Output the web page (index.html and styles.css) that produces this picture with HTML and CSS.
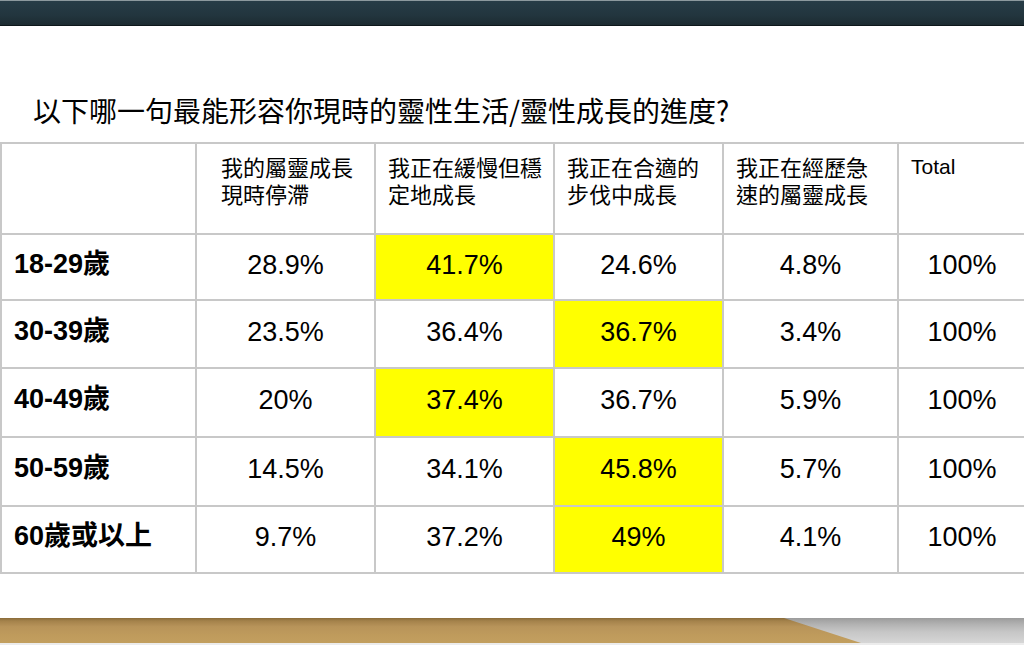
FILE: index.html
```html
<!DOCTYPE html>
<html lang="zh-Hant">
<head>
<meta charset="utf-8">
<title>靈性成長進度</title>
<link rel="stylesheet" href="styles.css">
</head>
<body>
<div class="slide">
  <div class="topbar"></div>
  <h1 class="title">以下哪一句最能形容你現時的靈性生活/靈性成長的進度?</h1>
  <table class="data">
    <colgroup>
      <col class="c0"><col class="c1"><col class="c2"><col class="c3"><col class="c4"><col class="c5">
    </colgroup>
    <thead>
      <tr class="head">
        <th></th>
        <th class="wide">我的屬靈成長<br>現時停滯</th>
        <th>我正在緩慢但穩<br>定地成長</th>
        <th>我正在合適的<br>步伐中成長</th>
        <th>我正在經歷急<br>速的屬靈成長</th>
        <th class="en">Total</th>
      </tr>
    </thead>
    <tbody>
      <tr class="r1"><th>18-29歲</th><td>28.9%</td><td class="hi">41.7%</td><td>24.6%</td><td>4.8%</td><td>100%</td></tr>
      <tr class="r2"><th>30-39歲</th><td>23.5%</td><td>36.4%</td><td class="hi">36.7%</td><td>3.4%</td><td>100%</td></tr>
      <tr class="r3"><th>40-49歲</th><td>20%</td><td class="hi">37.4%</td><td>36.7%</td><td>5.9%</td><td>100%</td></tr>
      <tr class="r4"><th>50-59歲</th><td>14.5%</td><td>34.1%</td><td class="hi">45.8%</td><td>5.7%</td><td>100%</td></tr>
      <tr class="r5"><th>60歲或以上</th><td>9.7%</td><td>37.2%</td><td class="hi">49%</td><td>4.1%</td><td>100%</td></tr>
    </tbody>
  </table>
  <div class="spacer"></div>
  <div class="footbar"></div>
  <div class="footedge"></div>
</div>
</body>
</html>
```

FILE: styles.css
```css
html, body {
  margin: 0;
  padding: 0;
  background: #ffffff;
  overflow: hidden;
}

.slide {
  width: 1024px;
  height: 645px;
  display: flex;
  flex-direction: column;
  overflow: hidden;
  font-family: "Liberation Sans", "Noto Sans CJK TC", sans-serif;
  color: #000;
}

.topbar {
  flex: 0 0 auto;
  height: 24px;
  border-top: 1px solid #8c999e;
  border-bottom: 1px solid #0d171b;
  background: linear-gradient(to bottom, #273c47 0%, #22353e 60%, #1c2b31 100%);
}

.title {
  margin: 64px 0 12px 33px;
  height: 40px;
  font-family: "Noto Sans CJK TC", sans-serif;
  font-weight: 400;
  font-size: 28px;
  line-height: 40px;
  white-space: nowrap;
}

.data {
  flex: 0 0 auto;
  border-collapse: collapse;
  table-layout: fixed;
  width: 1025px;
  margin-left: 0;
}

.c0 { width: 195px; }
.c1 { width: 179px; }
.c2 { width: 179px; }
.c3 { width: 169px; }
.c4 { width: 175px; }
.c5 { width: 128px; }

.data th,
.data td {
  border: 2px solid #c8c8c8;
  padding: 0;
}

.head {
  height: 91px;
}

.data .head th {
  vertical-align: top;
  text-align: left;
  padding: 9px 8px 0 12px;
  font-family: "Noto Sans CJK TC", sans-serif;
  font-weight: 400;
  font-size: 22px;
  line-height: 27px;
  white-space: nowrap;
}

.data .head th.wide {
  padding-left: 24px;
}

.data .head th.en {
  font-family: "Liberation Sans", sans-serif;
  font-size: 21px;
  padding-top: 9px;
}

.r1 { height: 66px; }
.r2 { height: 68px; }
.r3 { height: 69px; }
.r4 { height: 69px; }
.r5 { height: 67px; }

.data tbody th {
  text-align: left;
  padding: 0 0 7px 12px;
  font-family: "Liberation Sans", "Noto Sans CJK TC", sans-serif;
  font-weight: 700;
  font-size: 27px;
  line-height: 30px;
  vertical-align: middle;
  white-space: nowrap;
}

.data tbody td {
  text-align: center;
  vertical-align: middle;
  padding-bottom: 5px;
  font-size: 27px;
  line-height: 30px;
}

.data tbody td.hi {
  background: #ffff00;
}

.spacer {
  flex: 1 1 auto;
}

.footbar {
  flex: 0 0 auto;
  height: 25px;
  position: relative;
  background: linear-gradient(to bottom, #9c9c9c 0%, #b2b2b2 25%, #c6c6c6 55%, #d6d6d6 100%);
}

.footbar::before {
  content: "";
  position: absolute;
  inset: 0;
  background: linear-gradient(to bottom, #8a6c3a 0%, #a4824b 12%, #b8945a 35%, #bf9b5c 70%, #c29f5f 100%);
  clip-path: polygon(0 0, 784px 0, 861px 100%, 0 100%);
}

.footedge {
  flex: 0 0 auto;
  height: 2px;
  background: #ececec;
}
```
